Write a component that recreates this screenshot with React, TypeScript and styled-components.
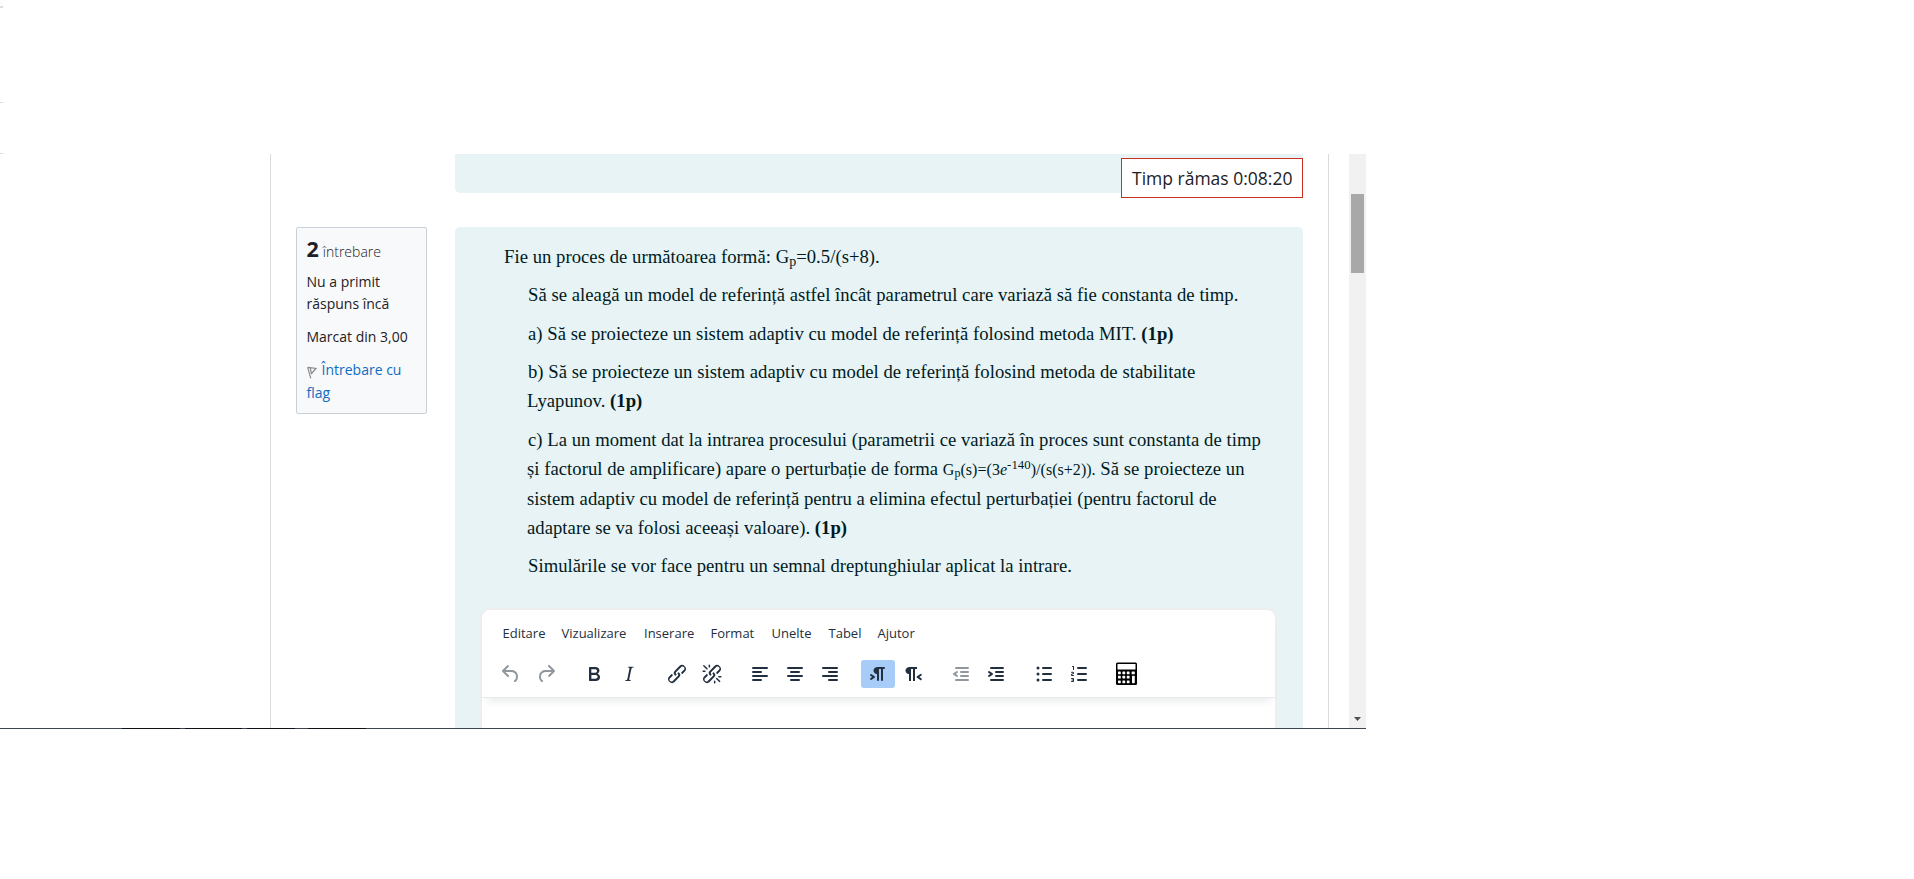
import React from 'react';
import styled, { createGlobalStyle } from 'styled-components';

const GlobalStyle = createGlobalStyle`
  *, *::before, *::after { box-sizing: border-box; }
  body {
    margin: 0;
    background: #fff;
    color: #1d2125;
    font-family: "Open Sans", "Noto Sans", sans-serif;
    font-size: 14px;
  }
`;

const Page = styled.div`
  display: flex;
  flex-direction: column;
  width: 1914px;
  height: 879px;
  overflow: hidden;
`;

const Header = styled.div`
  display: flex;
  flex-direction: column;
  flex: none;
  height: 154px;
  padding-top: 6px;
`;

const Tick = styled.div<{ $thick?: boolean; $after: number }>`
  flex: none;
  width: 3px;
  height: ${p => (p.$thick ? 2 : 1)}px;
  margin-bottom: ${p => p.$after}px;
  background: #dcdddf;
`;

const Viewport = styled.div`
  display: flex;
  flex: none;
  width: 1366px;
  height: 574px;
  padding-left: 270px;
  overflow: hidden;
`;

const Content = styled.main`
  width: 1059px;
  flex: none;
  margin-right: 20px;
  padding: 0 25px;
  border: solid #d9dbdd;
  border-width: 0 1px;
`;

const PreviousRow = styled.div`
  position: relative;
  height: 39px;
  margin-bottom: 34px;
  padding-left: 159px;
`;

const PreviousQuestion = styled.div`
  height: 39px;
  border-radius: 0 0 5px 5px;
  background: #e7f3f5;
`;

const Timer = styled.div`
  position: absolute;
  top: 4px;
  right: 0;
  width: 182px;
  height: 40px;
  padding-left: 10px;
  border: 1px solid #ca3120;
  background: #fff;
  font-size: 17.5px;
  line-height: 38px;
  white-space: nowrap;
`;

const QuestionRow = styled.div`
  display: flex;
  align-items: flex-start;
  gap: 28px;
`;

const Info = styled.aside`
  flex: none;
  width: 131px;
  height: 187px;
  padding: 8px 0 0 9.5px;
  border: 1px solid #cad0d7;
  border-radius: 2px;
  background: #f8f9fa;
  white-space: nowrap;
`;

const InfoTitle = styled.h3`
  display: flex;
  align-items: baseline;
  gap: 4px;
  height: 27px;
  margin: 0 0 7.5px;
  font-size: 14px;
  font-weight: 300;
  line-height: 25px;
`;

const Number = styled.span`
  font-size: 21.5px;
  font-weight: 700;
`;

const InfoText = styled.div`
  margin-bottom: 11px;
  line-height: 22px;
`;

const FlagLink = styled.div`
  color: #0f6cbf;
  line-height: 23px;
  margin-top: -1px;

  svg {
    margin: 0 5px -4px 0;
  }
`;

const Question = styled.section`
  width: 848px;
  height: 520px;
  padding: 14.5px 25px 0;
  border-radius: 5px 5px 0 0;
  background: #e7f3f5;
`;

const Statement = styled.div`
  height: 366.5px;
  color: #001a1e;
  font-family: "Liberation Serif", serif;
  font-size: 18.67px;
  letter-spacing: 0.035px;
  line-height: 29px;
  white-space: nowrap;

  sub, sup { font-size: 0.75em; line-height: 0; }
  sub { vertical-align: -0.2em; }
  sup { font-size: 0.8em; vertical-align: 0.45em; }
`;

const Paragraph = styled.p<{ $lead?: boolean }>`
  margin: 0 0 9.6px;
  padding-left: ${p => (p.$lead ? 24 : 47)}px;
  text-indent: ${p => (p.$lead ? 0 : 1)}px;
`;

const Formula = styled.span`
  font-size: 16px;
`;

const Editor = styled.div`
  width: 797px;
  height: 200px;
  border: 2px solid #eee;
  border-radius: 10px;
  background: #fff;
`;

const EditorHeader = styled.div`
  height: 88px;
  box-shadow: 0 8px 8px -5px rgba(34, 47, 62, 0.1);
  border-bottom: 1px solid #e9eaec;
  border-radius: 8px 8px 0 0;
`;

const MenuBar = styled.div`
  display: flex;
  height: 45px;
  padding: 12px 0 0 20.5px;
  color: #222f3e;
  font-size: 13px;
  line-height: 22px;
  white-space: nowrap;
`;

const MenuItem = styled.span<{ $width: number }>`
  width: ${p => p.$width}px;
`;

const Toolbar = styled.div`
  display: flex;
  gap: 14px;
  padding: 5px 0 0 12px;
`;

const Group = styled.div`
  display: flex;
  gap: 1px;
`;

const ToolButton = styled.button<{ $active?: boolean; $disabled?: boolean }>`
  display: flex;
  align-items: center;
  justify-content: center;
  width: 34px;
  height: 28px;
  padding: 0;
  border: 0;
  border-radius: 3px;
  background: ${p => (p.$active ? '#a6ccf7' : 'none')};
  color: ${p => (p.$disabled ? 'rgba(34, 47, 62, 0.5)' : '#222f3e')};
`;

const ScrollTrack = styled.div`
  display: flex;
  flex: none;
  flex-direction: column;
  align-items: center;
  justify-content: space-between;
  width: 17px;
  padding: 40px 0 7px;
  background: #f1f1f1;
`;

const ScrollThumb = styled.div`
  width: 13px;
  height: 79px;
  background: #a8a8a8;
`;

const Edge = styled.div`
  display: flex;
  flex: none;
  width: 1366px;
  height: 1px;
  background: #3b4652;
`;

const EdgePart = styled.div<{ $width: number; $before: number }>`
  width: ${p => p.$width}px;
  margin-left: ${p => p.$before}px;
  background: #101216;
`;

const chain =
  'M6.2 12.3a1 1 0 0 1 1.4 1.4l-2 2a2 2 0 1 0 2.6 2.8l4.8-4.8a1 1 0 0 0 0-1.4 1 1 0 1 1 1.4-1.3 2.9 2.9 0 0 1 0 4L9.6 20a3.9 3.9 0 0 1-5.5-5.5l2-2Zm11.6-.6a1 1 0 0 1-1.4-1.4l2-2a2 2 0 1 0-2.6-2.8L11 10.3a1 1 0 0 0 0 1.4A1 1 0 1 1 9.6 13a2.9 2.9 0 0 1 0-4L14.4 4a3.9 3.9 0 0 1 5.5 5.5l-2 2Z';

const bar = (x: number, y: number, w: number) =>
  `M${x + 1} ${y}h${w - 2}a1 1 0 0 1 0 2h-${w - 2}a1 1 0 0 1 0-2Z`;

const icons = {
  undo: 'M6.4 8H12c3.7 0 6.2 2 6.8 5.1.6 2.7-.4 5.6-2.3 6.8a1 1 0 0 1-1-1.8c1.1-.6 1.8-2.7 1.4-4.6-.5-2.1-2.1-3.5-4.9-3.5H6.4l3.3 3.3a1 1 0 1 1-1.4 1.4l-5-5a1 1 0 0 1 0-1.4l5-5a1 1 0 0 1 1.4 1.4L6.4 8Z',
  redo: 'M17.6 10H12c-2.8 0-4.4 1.4-4.9 3.5-.4 2 .3 4 1.4 4.6a1 1 0 1 1-1 1.8c-2-1.2-2.9-4.1-2.3-6.8.6-3 3-5.1 6.8-5.1h5.6l-3.3-3.3a1 1 0 1 1 1.4-1.4l5 5a1 1 0 0 1 0 1.4l-5 5a1 1 0 0 1-1.4-1.4l3.3-3.3Z',
  bold: 'M7.8 19c-.3 0-.5 0-.6-.2l-.2-.5V5.7c0-.2 0-.4.2-.5l.6-.2h5c1.5 0 2.7.3 3.5 1 .7.6 1.1 1.4 1.1 2.5a3 3 0 0 1-.6 1.9c-.4.6-1 1-1.6 1.2.4.1.9.3 1.3.6s.8.7 1 1.2c.4.4.5 1 .5 1.6 0 1.3-.4 2.3-1.3 3-.8.7-2.1 1-3.8 1H7.8Zm5-8.3c.6 0 1.2-.1 1.6-.5.4-.3.6-.7.6-1.3 0-1.1-.8-1.7-2.3-1.7H9.3v3.5h3.4Zm.5 6c.7 0 1.3-.1 1.7-.4.4-.4.6-.9.6-1.5s-.2-1-.7-1.4c-.4-.3-1-.4-2-.4H9.4v3.8h4Z',
  italic: 'm16.7 4.7-.1.9h-.3c-.6 0-1 0-1.4.3-.3.3-.4.6-.5 1.1l-2.1 9.8v.6c0 .5.4.8 1.4.8h.2l-.2.8H8l.2-.8h.2c1.1 0 1.8-.5 2-1.5l2-9.8.1-.5c0-.6-.4-.8-1.4-.8h-.3l.2-.9h5.8Z',
  link: chain,
  unlink: chain + 'M7.6 6.3a.8.8 0 0 1-1 1.1L3.3 4.2a.7.7 0 1 1 1-1l3.2 3.1ZM5.1 8.6a.8.8 0 0 1 0 1.5H3a.8.8 0 0 1 0-1.5H5Zm5-3.5a.8.8 0 0 1-1.5 0V3a.8.8 0 0 1 1.5 0V5Zm6 11.8a.8.8 0 0 1 1-1l3.2 3.2a.8.8 0 0 1-1 1L16 17Zm-2.2 2a.8.8 0 0 1 1.5 0V21a.8.8 0 0 1-1.5 0V19Zm5-3.5a.7.7 0 1 1 0-1.5H21a.8.8 0 0 1 0 1.5H19Z',
  left: bar(4, 5, 16) + bar(4, 9, 10) + bar(4, 13, 16) + bar(4, 17, 10),
  center: bar(4, 5, 16) + bar(7, 9, 10) + bar(4, 13, 16) + bar(7, 17, 10),
  right: bar(4, 5, 16) + bar(10, 9, 10) + bar(4, 13, 16) + bar(10, 17, 10),
  ltr: 'M11 5h7a1 1 0 0 1 0 2h-1v11a1 1 0 0 1-2 0V7h-2v11a1 1 0 0 1-2 0v-6c-.5 0-1 0-1.4-.3A3.4 3.4 0 0 1 7.8 10a3.3 3.3 0 0 1 0-2.8 3.4 3.4 0 0 1 1.8-1.8L11 5ZM4.4 16.2 6.2 15l-1.8-1.2a1 1 0 0 1 1.2-1.6l3 2a1 1 0 0 1 0 1.6l-3 2a1 1 0 1 1-1.2-1.6Z',
  rtl: 'M8 5h8v2h-2v12h-2V7h-2v12H8v-7c-.5 0-1 0-1.4-.3A3.4 3.4 0 0 1 4.8 10a3.3 3.3 0 0 1 0-2.8 3.4 3.4 0 0 1 1.8-1.8L8 5Zm12 11.2a1 1 0 1 1-1 1.6l-3-2a1 1 0 0 1 0-1.6l3-2a1 1 0 1 1 1 1.6L18.4 15l1.8 1.2Z',
  outdent: bar(6, 5, 14) + bar(11, 9, 9) + bar(11, 13, 9) + bar(6, 17, 14) + 'M8.6 13.2a1 1 0 0 1-1.2 1.6l-3-2a1 1 0 0 1 0-1.6l3-2a1 1 0 0 1 1.2 1.6L6.8 12l1.8 1.2Z',
  indent: bar(6, 5, 14) + bar(11, 9, 9) + bar(11, 13, 9) + bar(6, 17, 14) + 'M4.4 13.2 6.2 12l-1.8-1.2a1 1 0 0 1 1.2-1.6l3 2a1 1 0 0 1 0 1.6l-3 2a1 1 0 0 1-1.2-1.6Z',
  bullets: bar(10, 5, 10) + bar(10, 11, 10) + bar(10, 17, 10) + 'M4.5 6a1.5 1.5 0 1 1 3 0a1.5 1.5 0 1 1-3 0ZM4.5 12a1.5 1.5 0 1 1 3 0a1.5 1.5 0 1 1-3 0ZM4.5 18a1.5 1.5 0 1 1 3 0a1.5 1.5 0 1 1-3 0Z',
  numbers: bar(10, 5, 10) + bar(10, 11, 10) + bar(10, 17, 10) + 'M6 4v3.5a.5.5 0 0 0 1 0V4.5a.5.5 0 0 0-.5-.5H5.5a.5.5 0 0 0 0 1H6ZM5 12.8l.2.2h1.3a.5.5 0 0 1 0 1H5a1 1 0 0 1-1-1v-.2c0-.4.3-.8.6-1l1.2-.5.2-.3-.2-.2H4.5a.5.5 0 0 1 0-1H6a1 1 0 0 1 1 1v.3c0 .4-.2.7-.6.9l-1.2.5-.2.3ZM7 17v2c0 .6-.4 1-1 1H4.5a.5.5 0 0 1 0-1H6v-.6H4.6v-.9H6V17H4.5a.5.5 0 0 1 0-1H6c.6 0 1 .4 1 1Z',
};

type IconName = keyof typeof icons;

const Icon = ({ name }: { name: IconName }) => (
  <svg width="24" height="24" viewBox="0 0 24 24" fill="currentColor" fillRule={name === 'bold' ? 'evenodd' : 'nonzero'}>
    <path d={icons[name]} />
  </svg>
);

const CalculatorIcon = () => (
  <svg width="22" height="24" viewBox="0 0 22 24">
    <rect x="0" y="0.5" width="21" height="22.5" rx="1.5" fill="#000" />
    <rect x="1.5" y="2" width="18" height="5.5" fill="#fff" />
    <g fill="#fff">
      {[9.5, 13.8, 18.4].map(y =>
        [2, 6.4, 10.8].map(x => <rect key={`${x}-${y}`} x={x} y={y} width="2.8" height="2.8" rx="0.6" />),
      )}
      <rect x="15.6" y="9.5" width="3.2" height="2.8" rx="0.6" />
      <rect x="16" y="13.8" width="2.8" height="7.4" rx="0.6" />
    </g>
  </svg>
);

const FlagIcon = () => (
  <svg width="10" height="13" viewBox="0 0 10 13" fill="none" stroke="#8a8a8a" strokeWidth="1.2">
    <path d="M.6 1.2 3.8 12.4M1 1.4l8 1L4 8M3.3 1.8l1 5.6" />
  </svg>
);

const groups: { name: IconName; disabled?: boolean; active?: boolean }[][] = [
  [{ name: 'undo', disabled: true }, { name: 'redo', disabled: true }],
  [{ name: 'bold' }, { name: 'italic' }],
  [{ name: 'link' }, { name: 'unlink' }],
  [{ name: 'left' }, { name: 'center' }, { name: 'right' }],
  [{ name: 'ltr', active: true }, { name: 'rtl' }],
  [{ name: 'outdent', disabled: true }, { name: 'indent' }],
  [{ name: 'bullets' }, { name: 'numbers' }],
];

const menus: [string, number][] = [
  ['Editare', 59],
  ['Vizualizare', 82.5],
  ['Inserare', 66.5],
  ['Format', 61],
  ['Unelte', 57],
  ['Tabel', 49],
  ['Ajutor', 40],
];

export default function App() {
  return (
    <Page>
      <GlobalStyle />
      <Header>
        <Tick $thick $after={94} />
        <Tick $after={50} />
        <Tick $after={0} />
      </Header>
      <Viewport>
        <Content>
          <PreviousRow>
            <PreviousQuestion />
            <Timer>Timp rămas 0:08:20</Timer>
          </PreviousRow>
          <QuestionRow>
            <Info>
              <InfoTitle>
                <Number>2</Number>întrebare
              </InfoTitle>
              <InfoText>
                Nu a primit
                <br />
                răspuns încă
              </InfoText>
              <InfoText>Marcat din 3,00</InfoText>
              <FlagLink>
                <FlagIcon />
                Întrebare cu
                <br />
                flag
              </FlagLink>
            </Info>
            <Question>
              <Statement>
                <Paragraph $lead>
                  Fie un proces de următoarea formă: G<sub>p</sub>=0.5/(s+8).
                </Paragraph>
                <Paragraph>
                  Să se aleagă un model de referință astfel încât parametrul care variază să fie constanta de timp.
                </Paragraph>
                <Paragraph>
                  a) Să se proiecteze un sistem adaptiv cu model de referință folosind metoda MIT. <b>(1p)</b>
                </Paragraph>
                <Paragraph>
                  b) Să se proiecteze un sistem adaptiv cu model de referință folosind metoda de stabilitate
                  <br />
                  Lyapunov. <b>(1p)</b>
                </Paragraph>
                <Paragraph>
                  c) La un moment dat la intrarea procesului (parametrii ce variază în proces sunt constanta de timp
                  <br />
                  și factorul de amplificare) apare o perturbație de forma{' '}
                  <Formula>
                    G<sub>p</sub>(s)=(3<i>e</i><sup>-140</sup>)/(s(s+2)).
                  </Formula>{' '}
                  Să se proiecteze un
                  <br />
                  sistem adaptiv cu model de referință pentru a elimina efectul perturbației (pentru factorul de
                  <br />
                  adaptare se va folosi aceeași valoare). <b>(1p)</b>
                </Paragraph>
                <Paragraph>Simulările se vor face pentru un semnal dreptunghiular aplicat la intrare.</Paragraph>
              </Statement>
              <Editor>
                <EditorHeader>
                  <MenuBar>
                    {menus.map(([label, width]) => (
                      <MenuItem key={label} $width={width}>
                        {label}
                      </MenuItem>
                    ))}
                  </MenuBar>
                  <Toolbar>
                    {groups.map(group => (
                      <Group key={group[0].name}>
                        {group.map(tool => (
                          <ToolButton key={tool.name} $active={tool.active} $disabled={tool.disabled}>
                            <Icon name={tool.name} />
                          </ToolButton>
                        ))}
                      </Group>
                    ))}
                    <Group>
                      <ToolButton>
                        <CalculatorIcon />
                      </ToolButton>
                    </Group>
                  </Toolbar>
                </EditorHeader>
              </Editor>
            </Question>
          </QuestionRow>
        </Content>
        <ScrollTrack>
          <ScrollThumb />
          <svg width="7" height="4" viewBox="0 0 7 4" fill="#505050">
            <path d="M0 0h7L3.5 4Z" />
          </svg>
        </ScrollTrack>
      </Viewport>
      <Edge>
        <EdgePart $before={122} $width={58} />
        <EdgePart $before={5} $width={57} />
        <EdgePart $before={5} $width={48} />
        <EdgePart $before={13} $width={58} />
      </Edge>
    </Page>
  );
}
